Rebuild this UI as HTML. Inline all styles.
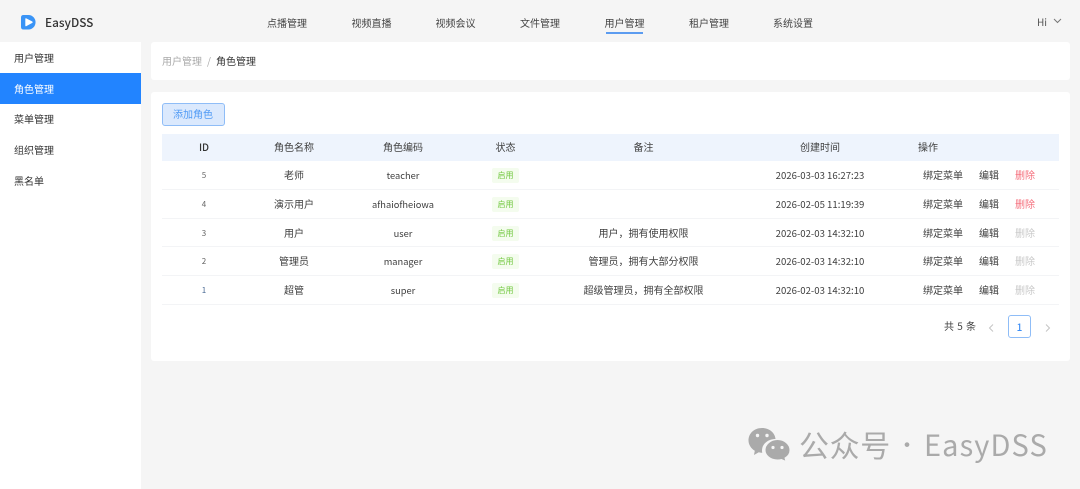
<!DOCTYPE html>
<html lang="zh"><head><meta charset="utf-8"><title>EasyDSS</title>
<style>
html,body{margin:0;padding:0}
body{width:1080px;height:489px;position:relative;overflow:hidden;background:#f5f5f5;font-family:"Noto Sans CJK SC","Liberation Sans",sans-serif;font-size:10px;color:#3f3f3f}
.b{position:absolute;background:#fff}
.t,.l{position:absolute;white-space:nowrap;line-height:14px;height:14px;filter:blur(.25px)}
.t{transform:translateX(-50%)}
.n{font-size:10px;color:#444;top:16px}
.s{left:14px;color:#333}
.h{top:140px;color:#3f3f3f}
.tag{position:absolute;left:492px;width:27px;height:15px;background:#f4fcee;border-radius:2px;color:#72c840;font-size:8px;line-height:15px;text-align:center}
.line{position:absolute;left:162px;width:897px;height:1px;background:#f3f4f6}
.id{font-size:8px;color:#666;margin-top:1px}
.c{font-size:9.300px}
.r{color:#f56c7a}.g{color:#c8c8c8}
</style></head><body>
<svg style="position:absolute;left:21px;top:15px" width="15" height="15" viewBox="0 0 15 15"><path d="M2.500 0H7.500A7 7.200 0 0 1 7.500 14.500H2.500Q0 14.500 0 12V2.500Q0 0 2.500 0Z" fill="#3a94f6"/><path d="M4.300 4Q4.300 2.900 5.300 3.400L11.300 6.500Q12.200 7.200 11.300 7.900L5.300 11.100Q4.300 11.600 4.300 10.500Z" fill="#fff"/></svg>
<div class="l" style="left:45px;top:16px;font-size:11.800px;color:#333;font-weight:500">EasyDSS</div>
<div class="t n" style="left:287px">点播管理</div>
<div class="t n" style="left:371.500px">视频直播</div>
<div class="t n" style="left:455.500px">视频会议</div>
<div class="t n" style="left:540px">文件管理</div>
<div class="t n" style="left:624.500px">用户管理</div>
<div class="b" style="left:606px;top:32px;width:37px;height:2px;background:#5c9cf0"></div>
<div class="t n" style="left:709px">租户管理</div>
<div class="t n" style="left:793px">系统设置</div>
<div class="l" style="left:1037px;top:15px;color:#555">Hi</div>
<svg style="position:absolute;left:1053px;top:18px" width="9" height="6" viewBox="0 0 9 6"><path d="M1 1L4.500 4.500L8 1" fill="none" stroke="#777" stroke-width="1"/></svg>

<div class="b" style="left:0;top:42px;width:141px;height:447px"></div>
<div class="b" style="left:0;top:73px;width:141px;height:31px;background:#2284ff"></div>
<div class="l s" style="top:51px">用户管理</div>
<div class="l s" style="top:82px;color:#fff">角色管理</div>
<div class="l s" style="top:112px">菜单管理</div>
<div class="l s" style="top:143px">组织管理</div>
<div class="l s" style="top:174px">黑名单</div>

<div class="b" style="left:151px;top:42px;width:919px;height:38px;border-radius:3px"></div>
<div class="l" style="left:162px;top:54px;color:#aaa">用户管理</div>
<div class="l" style="left:207px;top:54px;color:#aaa">/</div>
<div class="l" style="left:216px;top:54px;color:#333">角色管理</div>

<div class="b" style="left:151px;top:92px;width:919px;height:269px;border-radius:3px"></div>
<div class="b" style="left:162px;top:103px;width:61px;height:21px;background:#dbe9fd;border:1px solid #8fbdf7;border-radius:3px"></div>
<div class="t" style="left:193px;top:107px;color:#4f9af5">添加角色</div>

<div class="b" style="left:162px;top:134px;width:897px;height:27px;background:#eef4fd"></div>
<div class="t h" style="left:204px;font-weight:500;color:#333">ID</div>
<div class="t h" style="left:294px">角色名称</div>
<div class="t h" style="left:403px">角色编码</div>
<div class="t h" style="left:505.500px">状态</div>
<div class="t h" style="left:643.500px">备注</div>
<div class="t h" style="left:820px">创建时间</div>
<div class="l h" style="left:918px">操作</div>

<div class="line" style="top:189px"></div>
<div class="line" style="top:218px"></div>
<div class="line" style="top:246px"></div>
<div class="line" style="top:275px"></div>
<div class="line" style="top:304px"></div>

<!-- row 1 -->
<div class="t id" style="left:204px;top:168px">5</div><div class="t" style="left:294px;top:168px">老师</div><div class="t c" style="left:403px;top:168px">teacher</div><div class="tag" style="top:168px">启用</div>
<div class="t" style="left:820px;top:168px;font-size:9.600px">2026-03-03 16:27:23</div>
<div class="l" style="left:923px;top:168px">绑定菜单</div><div class="l" style="left:979px;top:168px">编辑</div><div class="l r" style="left:1015px;top:168px">删除</div>
<!-- row 2 -->
<div class="t id" style="left:204px;top:197px">4</div><div class="t" style="left:294px;top:197px">演示用户</div><div class="t c" style="left:403px;top:197px">afhaiofheiowa</div><div class="tag" style="top:197px">启用</div>
<div class="t" style="left:820px;top:197px;font-size:9.600px">2026-02-05 11:19:39</div>
<div class="l" style="left:923px;top:197px">绑定菜单</div><div class="l" style="left:979px;top:197px">编辑</div><div class="l r" style="left:1015px;top:197px">删除</div>
<!-- row 3 -->
<div class="t id" style="left:204px;top:226px">3</div><div class="t" style="left:294px;top:226px">用户</div><div class="t c" style="left:403px;top:226px">user</div><div class="tag" style="top:226px">启用</div>
<div class="t" style="left:643.500px;top:226px">用户，拥有使用权限</div>
<div class="t" style="left:820px;top:226px;font-size:9.600px">2026-02-03 14:32:10</div>
<div class="l" style="left:923px;top:226px">绑定菜单</div><div class="l" style="left:979px;top:226px">编辑</div><div class="l g" style="left:1015px;top:226px">删除</div>
<!-- row 4 -->
<div class="t id" style="left:204px;top:254px">2</div><div class="t" style="left:294px;top:254px">管理员</div><div class="t c" style="left:403px;top:254px">manager</div><div class="tag" style="top:254px">启用</div>
<div class="t" style="left:643.500px;top:254px">管理员，拥有大部分权限</div>
<div class="t" style="left:820px;top:254px;font-size:9.600px">2026-02-03 14:32:10</div>
<div class="l" style="left:923px;top:254px">绑定菜单</div><div class="l" style="left:979px;top:254px">编辑</div><div class="l g" style="left:1015px;top:254px">删除</div>
<!-- row 5 -->
<div class="t id" style="left:204px;top:283px;color:#4a6a94">1</div><div class="t" style="left:294px;top:283px">超管</div><div class="t c" style="left:403px;top:283px">super</div><div class="tag" style="top:283px">启用</div>
<div class="t" style="left:643.500px;top:283px">超级管理员，拥有全部权限</div>
<div class="t" style="left:820px;top:283px;font-size:9.600px">2026-02-03 14:32:10</div>
<div class="l" style="left:923px;top:283px">绑定菜单</div><div class="l" style="left:979px;top:283px">编辑</div><div class="l g" style="left:1015px;top:283px">删除</div>

<!-- pagination -->
<div class="l" style="left:944px;top:319px;word-spacing:1px">共 5 条</div>
<svg style="position:absolute;left:988px;top:323px" width="7" height="10" viewBox="0 0 7 10"><path d="M5 1.500L1.500 5L5 8.500" fill="none" stroke="#c4c4c4" stroke-width="1"/></svg>
<div class="b" style="left:1008px;top:315px;width:21px;height:21px;border:1px solid #8fbdf7;border-radius:3px"></div>
<div class="t" style="left:1019.500px;top:320px;color:#3f8ff5;font-weight:500">1</div>
<svg style="position:absolute;left:1044px;top:323px" width="7" height="10" viewBox="0 0 7 10"><path d="M2 1.500L5.500 5L2 8.500" fill="none" stroke="#c4c4c4" stroke-width="1"/></svg>

<!-- watermark -->
<svg style="position:absolute;left:748px;top:427px" width="44" height="36" viewBox="0 0 44 36">
<path d="M14 1C21.500 1 27 6 27.500 12C20 12 14 17 14 23.500C14 24.500 14.100 25 14.300 25.800C13 25.800 12 25.600 10.800 25.300L6 28L6.800 23.800C3 21.500 .5 17.500 .5 13.500C.5 6.500 6 1 14 1Z" fill="#aaa"/>
<path d="M29.500 12.500C36.500 12.500 42 17.500 42 23C42 26.500 40 29.300 37 31L38 34.500L33.500 32.500C32.300 32.900 31 33 29.500 33C22.500 33 17 28.500 17 23C17 17.500 22.500 12.500 29.500 12.500Z" fill="#aaa" stroke="#f5f5f5" stroke-width="1"/>
<circle cx="9.500" cy="8.500" r="1.700" fill="#f5f5f5"/><circle cx="19" cy="8.500" r="1.700" fill="#f5f5f5"/>
<circle cx="25" cy="20.500" r="1.600" fill="#f5f5f5"/><circle cx="34" cy="20.500" r="1.600" fill="#f5f5f5"/>
</svg>
<div class="l" style="left:799px;top:423px;height:42px;line-height:42px;font-size:30px;letter-spacing:.6px;color:#aaa">公众号</div>
<div class="l" style="left:896px;top:423px;height:42px;line-height:42px;font-size:22px;color:#aaa">·</div>
<div class="l" style="left:924px;top:423px;height:42px;line-height:42px;font-size:29px;letter-spacing:1.100px;color:#aaa">EasyDSS</div>
</body></html>
